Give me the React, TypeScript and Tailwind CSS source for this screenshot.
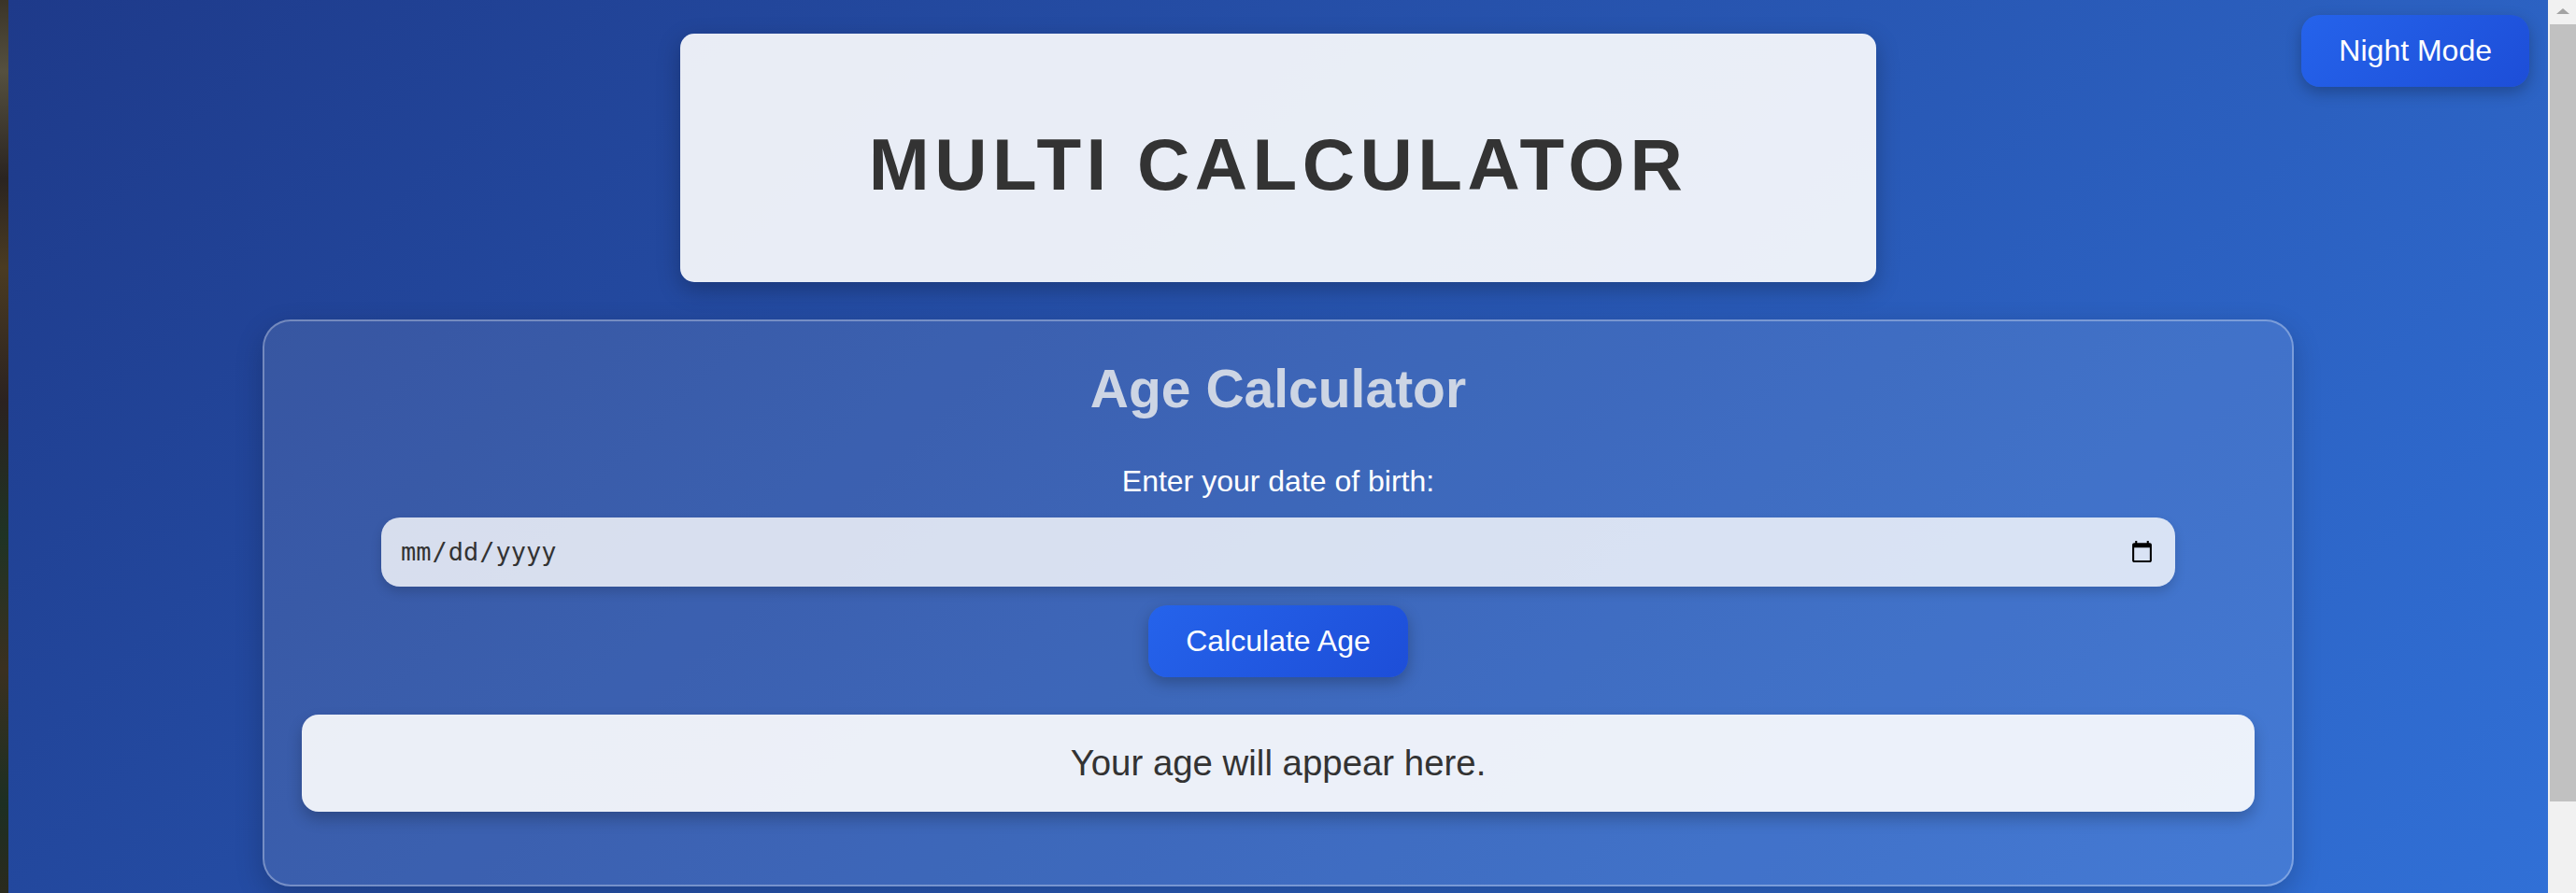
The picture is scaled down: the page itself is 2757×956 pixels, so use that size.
import { useState } from 'react'

function ageFrom(dob: string): string {
  if (!dob) return 'Please enter your date of birth.'
  const birth = new Date(dob)
  const today = new Date()
  if (birth > today) return 'Date of birth cannot be in the future.'
  let years = today.getFullYear() - birth.getFullYear()
  let months = today.getMonth() - birth.getMonth()
  let days = today.getDate() - birth.getDate()
  if (days < 0) {
    months -= 1
    days += new Date(today.getFullYear(), today.getMonth(), 0).getDate()
  }
  if (months < 0) {
    years -= 1
    months += 12
  }
  return `You are ${years} years, ${months} months and ${days} days old.`
}

// page scrollbar as it shows in the screenshot
function Scrollbar() {
  return (
    <div className="flex w-[30px] shrink-0 flex-col bg-[#f1f1f1]">
      <div className="flex h-[26px] items-start justify-center pt-[9px] pl-[2px]">
        <div className="h-0 w-0 border-x-[7px] border-b-[6px] border-x-transparent border-b-[#a3a3a3]" />
      </div>
      <div className="ml-[2px] h-[832px] bg-[#c1c1c1]" />
    </div>
  )
}

export default function App() {
  const [dob, setDob] = useState('')
  const [result, setResult] = useState('Your age will appear here.')
  const [night, setNight] = useState(false)

  return (
    <div className="flex h-screen overflow-hidden font-['Liberation_Sans',Arial,sans-serif]">
      {/* strip of the backdrop photo peeking out on the left */}
      <div className="w-[9px] shrink-0 bg-[linear-gradient(180deg,#3a3428_0%,#55503f_8%,#2a2420_20%,#4a3b22_30%,#2b2220_45%,#1f3324_60%,#3a3020_75%,#1d2f22_90%,#2a2a1e_100%)]" />

      <main
        className={
          night
            ? 'relative min-h-[1039px] flex-1 self-start bg-[linear-gradient(135deg,#0f172a,#1e293b)] pt-[36px] pb-[90px]'
            : 'relative min-h-[1039px] flex-1 self-start bg-[linear-gradient(135deg,#1e3a8a,#3171d8)] pt-[36px] pb-[90px]'
        }
      >
        <button
          onClick={() => setNight((n) => !n)}
          className="absolute top-[16px] right-[20px] rounded-[20px] bg-[linear-gradient(135deg,#2563eb,#1d4ed8)] px-[40px] py-[20px] text-[32px] leading-[1.15] text-white shadow-[0_6px_16px_rgba(0,0,0,0.25)] cursor-pointer"
        >
          {night ? 'Day Mode' : 'Night Mode'}
        </button>

        <header className="mx-auto w-[1280px] rounded-[15px] bg-white/90 pt-[96px] pb-[80px] text-center shadow-[0_8px_24px_rgba(0,0,0,0.25)]">
          <h1 className="text-[78px] leading-[1.15] font-bold tracking-[5.5px] text-[#333]">
            MULTI CALCULATOR
          </h1>
        </header>

        <section className="mx-auto mt-[40px] w-[80%] rounded-[30px] border-2 border-white/30 bg-white/10 px-[40px] pt-[40px] pb-[78px] text-center shadow-[0_10px_30px_rgba(0,0,0,0.2)]">
          <h2 className="text-[57px] leading-[1.15] font-bold text-[#cdd5e4]">Age Calculator</h2>
          <label htmlFor="dob" className="mt-[48px] block text-[32px] leading-[1.15] text-white">
            Enter your date of birth:
          </label>
          <input
            id="dob"
            type="date"
            value={dob}
            onChange={(e) => setDob(e.target.value)}
            className="mx-auto mt-[20px] block h-[74px] w-[1920px] rounded-[20px] border-0 bg-white/80 px-[20px] font-['DejaVu_Sans_Mono',monospace] text-[27px] text-[#333] shadow-[0_6px_12px_rgba(0,0,0,0.15)] outline-none"
          />
          <button
            onClick={() => setResult(ageFrom(dob))}
            className="mt-[20px] rounded-[20px] bg-[linear-gradient(135deg,#2563eb,#1d4ed8)] px-[40px] py-[20px] text-[32px] leading-[1.15] text-white shadow-[0_6px_16px_rgba(0,0,0,0.25)] cursor-pointer"
          >
            Calculate Age
          </button>
          <div className="mt-[40px] rounded-[18px] bg-white/90 py-[30px] text-[38.4px] leading-[1.15] text-[#333] shadow-[0_8px_16px_rgba(0,0,0,0.22)]">
            {result}
          </div>
        </section>
      </main>

      <Scrollbar />
    </div>
  )
}
